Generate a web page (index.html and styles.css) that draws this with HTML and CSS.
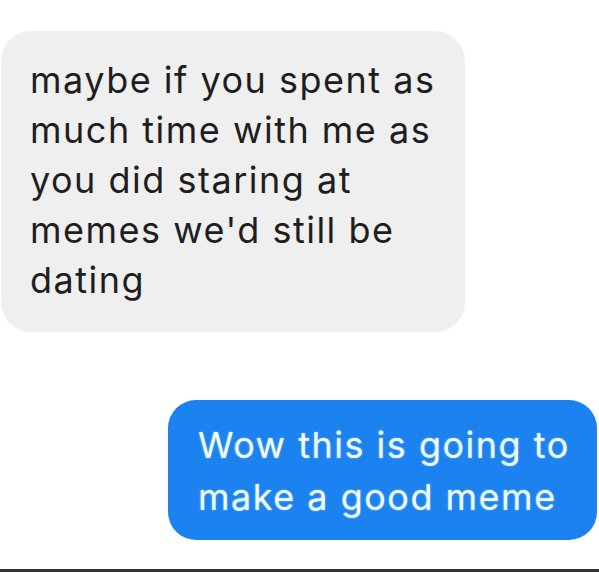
FILE: index.html
```html
<!DOCTYPE html>
<html>
<head>
<meta charset="utf-8">
<link rel="stylesheet" href="styles.css">
</head>
<body>
<div class="chat">
  <div class="bubble received">maybe if you spent as<br>much time with me as<br>you did staring at<br>memes we'd still be<br>dating</div>
  <div class="bubble sent">Wow this is going to<br>make a good meme</div>
</div>
<div class="bottom-bar"></div>
</body>
</html>
```

FILE: styles.css
```css
html, body {
  margin: 0;
  padding: 0;
  background: #ffffff;
}
body {
  width: 599px;
  height: 572px;
  overflow: hidden;
  display: flex;
  flex-direction: column;
  font-family: "Inter", "Liberation Sans", sans-serif;
}
.chat {
  flex: 1;
  display: flex;
  flex-direction: column;
}
.bubble {
  box-sizing: border-box;
  font-size: 36px;
  letter-spacing: 1.5px;
  white-space: nowrap;
}
.received {
  margin: 31px 0 0 1px;
  width: 464px;
  height: 301px;
  padding: 24px 0 0 29px;
  line-height: 50px;
  background: #efefef;
  color: #1e1e1e;
  border-radius: 30px;
}
.sent {
  align-self: flex-end;
  margin: 68px 2px 0 0;
  width: 429px;
  height: 140px;
  padding: 19px 0 0 30px;
  line-height: 52px;
  background: #1c82f0;
  color: #eefcff;
  border-radius: 28px;
  text-shadow: 0 0 2px rgba(200, 245, 255, 0.6);
}
.bottom-bar {
  height: 3px;
  background: #333333;
}
```
